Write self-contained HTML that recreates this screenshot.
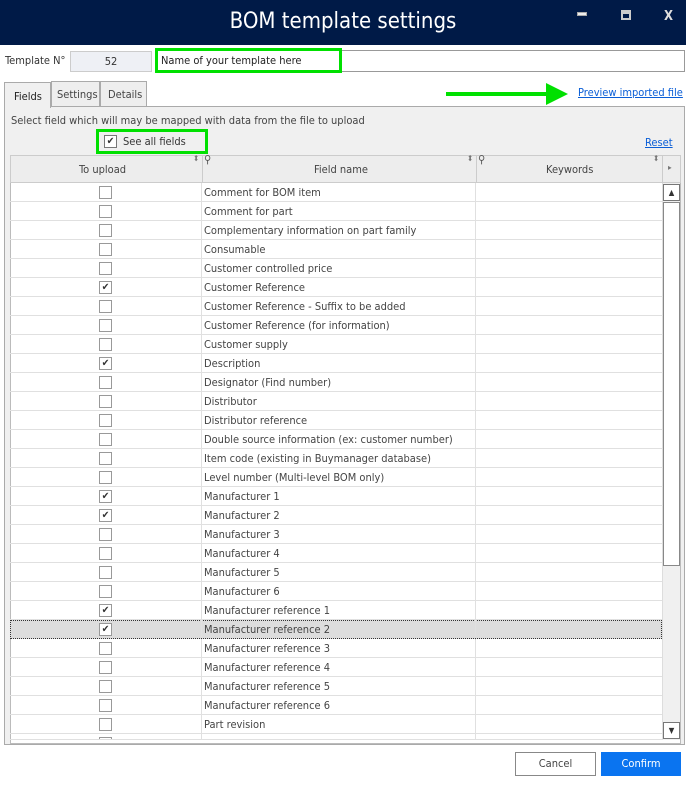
<!DOCTYPE html>
<html><head><meta charset="utf-8"><style>
*{box-sizing:border-box;margin:0;padding:0}
body{width:686px;height:787px;background:#fff;font-family:"DejaVu Sans Condensed","Liberation Sans",sans-serif;font-size:11px;color:#333;position:relative;overflow:hidden}
.a{position:absolute}
.title{left:0;top:0;width:686px;height:45px;background:#001a47;color:#fff;font-size:22px;text-align:center;line-height:44px}
.row{position:absolute;left:10px;width:652px;height:19px;border-bottom:1px solid #e0e0e0}
.row .c1{position:absolute;left:0;width:192px;height:19px;border-right:1px solid #e0e0e0}
.row .c2{position:absolute;left:192px;width:274px;height:19px;border-right:1px solid #e0e0e0;padding-left:2px;line-height:19px;color:#444;white-space:nowrap}
.cb{position:absolute;left:89px;top:3px;width:13px;height:13px;border:1px solid #999;background:#fff;font-size:10px;line-height:11px;text-align:center;color:#333}
</style></head><body>
<div class="a title">BOM template settings</div>
<div class="a" style="left:577px;top:12px;width:10px;height:4px;background:#eee;border:1px solid #aaa"></div>
<div class="a" style="left:621px;top:10px;width:10px;height:10px;border:2px solid #ccc;border-top-width:4px"></div>
<div class="a" style="left:664px;top:9px;color:#ddd;font-size:13px;font-weight:bold">X</div>

<div class="a" style="left:5px;top:54px;font-size:11px">Template N°</div>
<div class="a" style="left:70px;top:51px;width:82px;height:21px;border:1px solid #ccc;background:#eef0f5;text-align:center;line-height:19px">52</div>
<div class="a" style="left:155px;top:50px;width:530px;height:22px;border:1px solid #999;background:#fff"></div>
<div class="a" style="left:155px;top:48px;width:187px;height:25px;border:3px solid #00e000;padding-left:3px;line-height:19px;color:#222">Name of your template here</div>

<div class="a" style="left:4px;top:106px;width:681px;height:639px;border:1px solid #aaa;background:#f0f0f0"></div>
<div class="a" style="left:4px;top:82px;width:47px;height:26px;border:1px solid #aaa;border-bottom:none;background:#f0f0f0;padding:7px 0 0 9px;color:#222">Fields</div>
<div class="a" style="left:51px;top:81px;width:49px;height:25px;border:1px solid #aaa;border-bottom:none;background:#eee;padding:6px 0 0 5px;color:#444">Settings</div>
<div class="a" style="left:100px;top:81px;width:47px;height:25px;border:1px solid #aaa;border-bottom:none;background:#eee;padding:6px 0 0 7px;color:#444">Details</div>

<div class="a" style="left:446px;top:92px;width:104px;height:4px;background:#00e000"></div>
<svg class="a" style="left:546px;top:82px" width="24" height="24"><polygon points="0,1 22,12 0,23" fill="#00e000"/></svg>
<div class="a" style="left:578px;top:86px;color:#0a5ed7;text-decoration:underline">Preview imported file</div>

<div class="a" style="left:11px;top:114px;color:#444">Select field which will may be mapped with data from the file to upload</div>
<div class="a" style="left:96px;top:129px;width:112px;height:25px;border:3px solid #00e000"></div>
<div class="a" style="left:104px;top:135px;width:13px;height:13px;border:1px solid #777;background:#fff;font-size:10px;line-height:11px;text-align:center">✔</div>
<div class="a" style="left:123px;top:135px;color:#333">See all fields</div>
<div class="a" style="left:645px;top:136px;color:#0a5ed7;text-decoration:underline">Reset</div>

<div class="a" style="left:10px;top:155px;width:671px;height:589px;background:#fff;border:1px solid #bbb"></div>
<div class="a" style="left:10px;top:155px;width:671px;height:28px;background:#ededed;border:1px solid #ccc"></div>
<div class="a" style="left:202px;top:155px;width:1px;height:28px;background:#ccc"></div>
<div class="a" style="left:476px;top:155px;width:1px;height:28px;background:#ccc"></div>
<div class="a" style="left:662px;top:155px;width:1px;height:28px;background:#ccc"></div>
<div class="a" style="left:79px;top:163px;color:#444">To upload</div>
<div class="a" style="left:314px;top:163px;color:#444">Field name</div>
<div class="a" style="left:546px;top:163px;color:#444">Keywords</div>
<div class="a" style="left:193px;top:154px;font-size:8px;color:#777">⬍</div>
<div class="a" style="left:467px;top:154px;font-size:8px;color:#777">⬍</div>
<div class="a" style="left:653px;top:154px;font-size:8px;color:#777">⬍</div>
<div class="a" style="left:204px;top:153px;font-size:11px;color:#555">⚲</div>
<div class="a" style="left:478px;top:153px;font-size:11px;color:#555">⚲</div>
<div class="a" style="left:668px;top:163px;font-size:8px;color:#777">▸</div>

<div class="a" style="left:662px;top:183px;width:18px;height:557px;background:#f0f0f0;border-left:1px solid #ddd"></div>
<div class="a" style="left:663px;top:184px;width:17px;height:17px;border:1px solid #777;background:#fff;font-size:8px;text-align:center;line-height:15px">▲</div>
<div class="a" style="left:663px;top:202px;width:17px;height:364px;border:1px solid #888;background:#fff"></div>
<div class="a" style="left:663px;top:722px;width:17px;height:17px;border:1px solid #777;background:#fff;font-size:8px;text-align:center;line-height:15px">▼</div>

<div id="rows"></div>
<div class="a" style="left:515px;top:752px;width:81px;height:24px;border:1px solid #888;background:#fff;text-align:center;line-height:22px;color:#444">Cancel</div>
<div class="a" style="left:601px;top:752px;width:80px;height:24px;background:#0a74f0;color:#fff;text-align:center;line-height:24px">Confirm</div>
<script>
var items=[["Comment for BOM item",0],["Comment for part",0],["Complementary information on part family",0],["Consumable",0],["Customer controlled price",0],["Customer Reference",1],["Customer Reference - Suffix to be added",0],["Customer Reference (for information)",0],["Customer supply",0],["Description",1],["Designator (Find number)",0],["Distributor",0],["Distributor reference",0],["Double source information (ex: customer number)",0],["Item code (existing in Buymanager database)",0],["Level number (Multi-level BOM only)",0],["Manufacturer 1",1],["Manufacturer 2",1],["Manufacturer 3",0],["Manufacturer 4",0],["Manufacturer 5",0],["Manufacturer 6",0],["Manufacturer reference 1",1],["Manufacturer reference 2",1],["Manufacturer reference 3",0],["Manufacturer reference 4",0],["Manufacturer reference 5",0],["Manufacturer reference 6",0],["Part revision",0],["",0]];
var h="";
items.forEach(function(it,i){var top=183+i*19;var hgt=top+19>740?740-top:19;
var sel=i==23?"background:#ddd;outline:1px dotted #333;outline-offset:-1px;":"";
h+='<div class="row" style="top:'+top+'px;height:'+hgt+'px;overflow:hidden;'+sel+'"><div class="c1"><div class="cb">'+(it[1]?'✔':'')+'</div></div><div class="c2">'+it[0]+'</div></div>';});
document.getElementById("rows").innerHTML=h;
</script>
</body></html>
